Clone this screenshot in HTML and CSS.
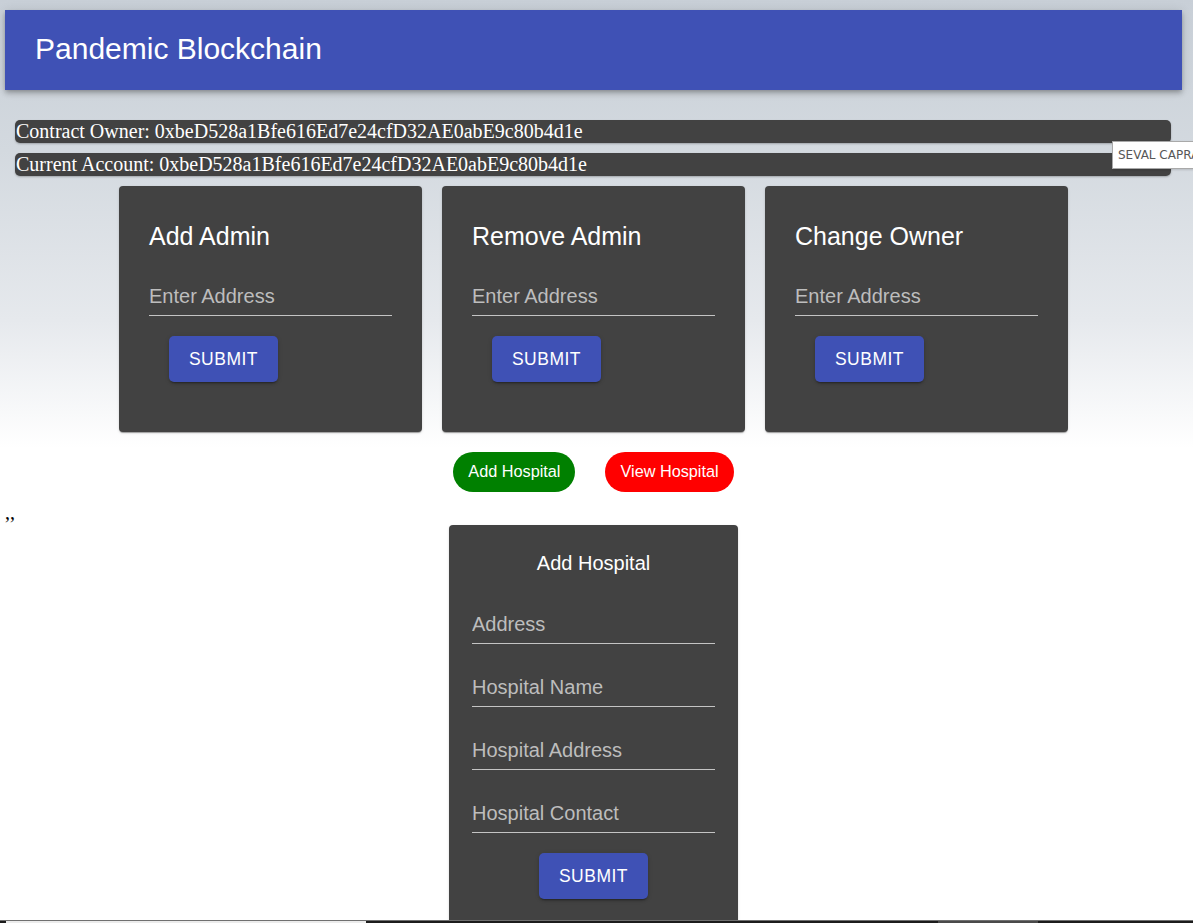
FILE: index.html
```html
<!DOCTYPE html>
<html lang="en">
<head>
<meta charset="utf-8">
<title>Pandemic Blockchain</title>
<link rel="stylesheet" href="styles.css">
</head>
<body>
<div class="page">
  <header class="appbar">
    <h1 class="appbar-title">Pandemic Blockchain</h1>
  </header>

  <div class="info-bar info-bar-first">Contract Owner: 0xbeD528a1Bfe616Ed7e24cfD32AE0abE9c80b4d1e</div>
  <div class="info-bar">Current Account: 0xbeD528a1Bfe616Ed7e24cfD32AE0abE9c80b4d1e</div>

  <div class="card-row">
    <div class="card">
      <h2 class="card-title">Add Admin</h2>
      <input class="field" type="text" placeholder="Enter Address">
      <button class="submit submit-left">Submit</button>
    </div>
    <div class="card">
      <h2 class="card-title">Remove Admin</h2>
      <input class="field" type="text" placeholder="Enter Address">
      <button class="submit submit-left">Submit</button>
    </div>
    <div class="card">
      <h2 class="card-title">Change Owner</h2>
      <input class="field" type="text" placeholder="Enter Address">
      <button class="submit submit-left">Submit</button>
    </div>
  </div>

  <div class="pill-row">
    <button class="pill pill-green">Add Hospital</button>
    <button class="pill pill-red">View Hospital</button>
  </div>

  <div class="stray">,,</div>

  <div class="hospital-wrap">
    <div class="hospital-card">
      <h2 class="hospital-title">Add Hospital</h2>
      <input class="field field-h" type="text" placeholder="Address">
      <input class="field field-h" type="text" placeholder="Hospital Name">
      <input class="field field-h" type="text" placeholder="Hospital Address">
      <input class="field field-h" type="text" placeholder="Hospital Contact">
      <button class="submit submit-center">Submit</button>
    </div>
  </div>
</div>

<div class="tooltip">SEVAL CAPRA</div>

<div class="taskbar">
  <span class="task task-light"></span>
  <span class="task-gap"></span>
  <span class="task task-gray"></span>
</div>
</body>
</html>
```

FILE: styles.css
```css
* { box-sizing: border-box; }

html, body {
  margin: 0;
  padding: 0;
}

body {
  background: #ffffff linear-gradient(to bottom, #c8cfd7 0px, #d3d9df 150px, #e6e9ed 320px, #ffffff 448px) no-repeat;
  background-size: 100% 460px;
  font-family: "Liberation Serif", "Times New Roman", serif;
  font-size: 20px;
  min-height: 923px;
}

.page {
  padding: 10px 11px 0 5px;
}

.appbar {
  height: 80px;
  background: #3f51b5;
  display: flex;
  align-items: center;
  padding-left: 30px;
  box-shadow: 0 2px 4px -1px rgba(0,0,0,0.2), 0 4px 5px 0 rgba(0,0,0,0.14), 0 1px 10px 0 rgba(0,0,0,0.12);
}

.appbar-title {
  margin: 0;
  font-family: "Liberation Sans", Arial, sans-serif;
  font-weight: 400;
  font-size: 30px;
  color: #ffffff;
  line-height: 1;
  padding-bottom: 2px;
}

.info-bar {
  margin: 10px 11px 0 10px;
  height: 23px;
  line-height: 23px;
  background: #424242;
  border-radius: 5px;
  color: #ffffff;
  font-size: 20px;
  padding-left: 1px;
  white-space: nowrap;
  overflow: hidden;
  box-shadow: 0 1px 2px rgba(0,0,0,0.25);
}

.info-bar-first {
  margin-top: 30px;
}

.card-row {
  display: flex;
  justify-content: center;
  gap: 20px;
  margin-top: 10px;
}

.card {
  width: 303px;
  background: #424242;
  border-radius: 4px;
  padding: 36px 30px 30px;
  display: flex;
  flex-direction: column;
  align-items: flex-start;
  box-shadow: 0 2px 1px -1px rgba(0,0,0,0.2), 0 1px 1px 0 rgba(0,0,0,0.14), 0 1px 3px 0 rgba(0,0,0,0.12);
}

.card-title {
  margin: 0;
  font-family: "Liberation Sans", Arial, sans-serif;
  font-weight: 400;
  font-size: 25px;
  line-height: 29px;
  color: #ffffff;
}

.field {
  display: block;
  width: 100%;
  height: 39px;
  margin: 26px 0 0;
  padding: 8px 0 7px;
  border: none;
  border-bottom: 1px solid #c4c4c4;
  background: transparent;
  font-family: "Liberation Sans", Arial, sans-serif;
  font-size: 20px;
  line-height: 23px;
  color: #ffffff;
  outline: none;
}

.field::placeholder {
  color: #bdbdbd;
  opacity: 1;
}

.submit {
  width: 109px;
  height: 46px;
  border: none;
  border-radius: 5px;
  background: #3f51b5;
  color: #ffffff;
  font-family: "Liberation Sans", Arial, sans-serif;
  font-size: 17.5px;
  letter-spacing: 0.5px;
  text-transform: uppercase;
  padding: 0;
  box-shadow: 0 3px 1px -2px rgba(0,0,0,0.2), 0 2px 2px 0 rgba(0,0,0,0.14), 0 1px 5px 0 rgba(0,0,0,0.12);
}

.submit-left {
  margin: 20px 0 20px 20px;
}

.pill-row {
  display: flex;
  justify-content: center;
  gap: 30px;
  margin-top: 20px;
}

.pill {
  height: 40px;
  border: none;
  border-radius: 20px;
  padding: 0 15px 2px;
  color: #ffffff;
  font-family: "Liberation Sans", Arial, sans-serif;
  font-size: 16.25px;
}

.pill-green { background: #008000; }
.pill-red { background: #ff0000; }

.stray {
  margin-top: 9px;
  height: 23px;
  line-height: 23px;
  font-size: 20px;
  color: #000000;
}

.hospital-wrap {
  display: flex;
  justify-content: center;
  margin-top: 1px;
}

.hospital-card {
  width: 289px;
  background: #424242;
  border-radius: 4px;
  padding: 27px 23px 30px;
  display: flex;
  flex-direction: column;
  align-items: center;
  box-shadow: 0 2px 1px -1px rgba(0,0,0,0.2), 0 1px 1px 0 rgba(0,0,0,0.14), 0 1px 3px 0 rgba(0,0,0,0.12);
}

.hospital-title {
  margin: 0 0 6px;
  font-family: "Liberation Sans", Arial, sans-serif;
  font-weight: 400;
  font-size: 20px;
  line-height: 23px;
  color: #ffffff;
}

.field-h {
  margin-top: 24px;
}

.submit-center {
  margin-top: 20px;
}

.tooltip {
  position: absolute;
  left: 1112px;
  top: 141px;
  width: 100px;
  height: 28px;
  background: #ffffff;
  border: 1px solid #a9a9a9;
  color: #575757;
  font-family: "DejaVu Sans", "Liberation Sans", sans-serif;
  font-size: 12px;
  line-height: 26px;
  padding-left: 5px;
  white-space: nowrap;
  overflow: hidden;
  box-shadow: 1px 1px 2px rgba(0,0,0,0.15);
}

.taskbar {
  position: fixed;
  left: 0;
  right: 0;
  bottom: 0;
  height: 3px;
  background: #1c1c1c;
  border-top: 1px solid #707070;
  display: flex;
}

.task {
  display: block;
  height: 2px;
}

.task-light {
  margin-left: 6px;
  width: 360px;
  background: #ececec;
}

.task-gap {
  width: 572px;
}

.task-gray {
  width: 100px;
  background: #4a4a4a;
}
```
